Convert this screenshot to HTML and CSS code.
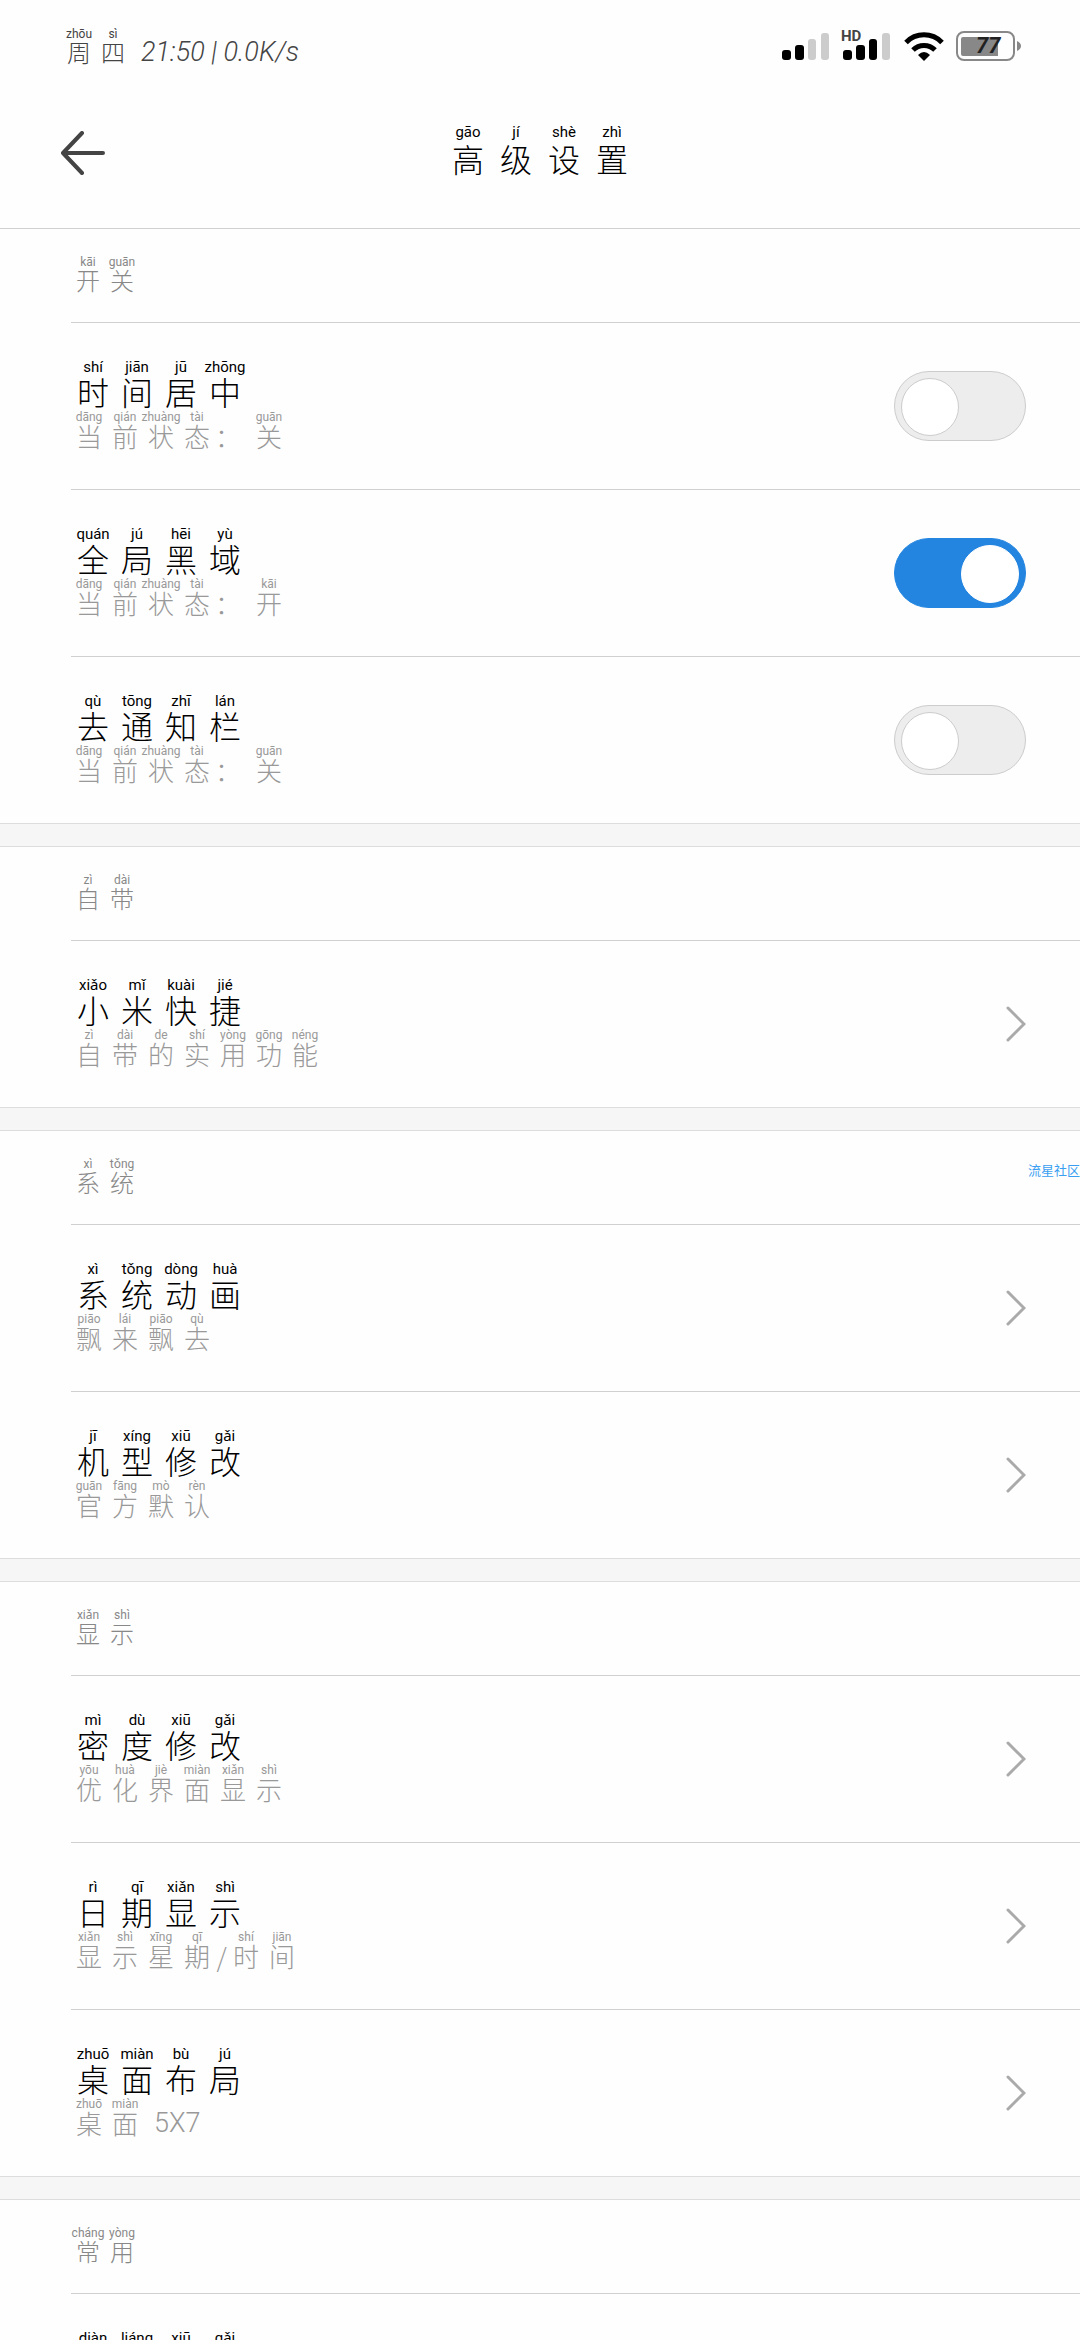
FILE: index.html
```html
<!DOCTYPE html>
<html lang="zh-CN">
<head>
<meta charset="utf-8">
<meta name="viewport" content="width=device-width, initial-scale=1">
<title>高级设置</title>
<link rel="stylesheet" href="styles.css">
</head>
<body>
<div class="app">
  <div class="status">
    <div class="py py-status"><ruby>周<rt>zhōu</rt></ruby><ruby>四<rt>sì</rt></ruby><span class="clock">21:50 | 0.0K/s</span></div>
    <div class="status-icons">
      <svg class="signal" width="49" height="30" viewBox="0 0 49 30" aria-hidden="true">
        <rect x="0" y="19" width="9" height="10" rx="3"/><rect x="13" y="14" width="9" height="15" rx="3"/>
        <rect class="dim" x="26" y="8" width="8" height="21" rx="3"/><rect class="dim" x="39" y="2" width="8" height="27" rx="3"/>
      </svg>
      <div class="signal-hd">
        <svg class="signal" width="49" height="30" viewBox="0 0 49 30" aria-hidden="true">
          <rect x="0" y="19" width="9" height="10" rx="3"/><rect x="13" y="14" width="9" height="15" rx="3"/>
          <rect x="26" y="8" width="8" height="21" rx="3"/><rect class="dim" x="39" y="2" width="8" height="27" rx="3"/>
        </svg>
        <span class="hd">HD</span>
      </div>
      <svg class="wifi" width="40" height="30" viewBox="1 0 40 30" aria-hidden="true">
        <path d="M3 11.500A25 25 0 0 1 39 11.500" fill="none" stroke="#000" stroke-width="5"/>
        <path d="M10 19A15.500 15.500 0 0 1 32 19" fill="none" stroke="#000" stroke-width="5"/>
        <path d="M21 30L15 24Q21 18 27 24Z"/>
      </svg>
      <div class="battery">
        <svg width="66" height="30" viewBox="0 0 66 30" aria-hidden="true">
          <rect x="1" y="1" width="57" height="28" rx="7" fill="none" stroke="#888" stroke-width="2"/>
          <path d="M7 6H42V25H7Q5 25 5 23V8Q5 6 7 6Z" fill="#888"/>
          <path d="M61 10Q65 12 65 15T61 20Z" fill="#888"/>
        </svg>
        <span class="level">77</span>
      </div>
    </div>
  </div>

  <header class="bar">
    <button class="back" type="button" aria-label="返回">
      <svg width="46" height="44" viewBox="0 0 46 44" aria-hidden="true"><path d="M22 2L3 22L22 42M3 22H43" fill="none" stroke="#444" stroke-width="4" stroke-linecap="round" stroke-linejoin="round"/></svg>
    </button>
    <h1 class="py py-head"><ruby>高<rt>gāo</rt></ruby><ruby>级<rt>jí</rt></ruby><ruby>设<rt>shè</rt></ruby><ruby>置<rt>zhì</rt></ruby></h1>
  </header>

  <main class="list">
    <section class="group">
      <h2 class="label py py-label"><ruby>开<rt>kāi</rt></ruby><ruby>关<rt>guān</rt></ruby></h2>
      <label class="row">
        <span class="text">
          <span class="py py-title"><ruby>时<rt>shí</rt></ruby><ruby>间<rt>jiān</rt></ruby><ruby>居<rt>jū</rt></ruby><ruby>中<rt>zhōng</rt></ruby></span>
          <span class="py py-sub"><ruby>当<rt>dāng</rt></ruby><ruby>前<rt>qián</rt></ruby><ruby>状<rt>zhuàng</rt></ruby><ruby>态<rt>tài</rt></ruby><span class="colon">：</span><ruby>关<rt>guān</rt></ruby></span>
        </span>
        <input class="switch" type="checkbox">
      </label>
      <label class="row">
        <span class="text">
          <span class="py py-title"><ruby>全<rt>quán</rt></ruby><ruby>局<rt>jú</rt></ruby><ruby>黑<rt>hēi</rt></ruby><ruby>域<rt>yù</rt></ruby></span>
          <span class="py py-sub"><ruby>当<rt>dāng</rt></ruby><ruby>前<rt>qián</rt></ruby><ruby>状<rt>zhuàng</rt></ruby><ruby>态<rt>tài</rt></ruby><span class="colon">：</span><ruby>开<rt>kāi</rt></ruby></span>
        </span>
        <input class="switch" type="checkbox" checked>
      </label>
      <label class="row">
        <span class="text">
          <span class="py py-title"><ruby>去<rt>qù</rt></ruby><ruby>通<rt>tōng</rt></ruby><ruby>知<rt>zhī</rt></ruby><ruby>栏<rt>lán</rt></ruby></span>
          <span class="py py-sub"><ruby>当<rt>dāng</rt></ruby><ruby>前<rt>qián</rt></ruby><ruby>状<rt>zhuàng</rt></ruby><ruby>态<rt>tài</rt></ruby><span class="colon">：</span><ruby>关<rt>guān</rt></ruby></span>
        </span>
        <input class="switch" type="checkbox">
      </label>
    </section>

    <section class="group">
      <h2 class="label py py-label"><ruby>自<rt>zì</rt></ruby><ruby>带<rt>dài</rt></ruby></h2>
      <a class="row" href="#shortcuts">
        <span class="text">
          <span class="py py-title"><ruby>小<rt>xiǎo</rt></ruby><ruby>米<rt>mǐ</rt></ruby><ruby>快<rt>kuài</rt></ruby><ruby>捷<rt>jié</rt></ruby></span>
          <span class="py py-sub"><ruby>自<rt>zì</rt></ruby><ruby>带<rt>dài</rt></ruby><ruby>的<rt>de</rt></ruby><ruby>实<rt>shí</rt></ruby><ruby>用<rt>yòng</rt></ruby><ruby>功<rt>gōng</rt></ruby><ruby>能<rt>néng</rt></ruby></span>
        </span>
        <svg class="chevron" width="20" height="36" viewBox="0 0 20 36" aria-hidden="true"><path d="M2 2L18 18L2 34"/></svg>
      </a>
    </section>

    <section class="group">
      <h2 class="label py py-label"><ruby>系<rt>xì</rt></ruby><ruby>统<rt>tǒng</rt></ruby></h2>
      <span class="watermark">流星社区</span>
      <a class="row" href="#animation">
        <span class="text">
          <span class="py py-title"><ruby>系<rt>xì</rt></ruby><ruby>统<rt>tǒng</rt></ruby><ruby>动<rt>dòng</rt></ruby><ruby>画<rt>huà</rt></ruby></span>
          <span class="py py-sub"><ruby>飘<rt>piāo</rt></ruby><ruby>来<rt>lái</rt></ruby><ruby>飘<rt>piāo</rt></ruby><ruby>去<rt>qù</rt></ruby></span>
        </span>
        <svg class="chevron" width="20" height="36" viewBox="0 0 20 36" aria-hidden="true"><path d="M2 2L18 18L2 34"/></svg>
      </a>
      <a class="row" href="#model">
        <span class="text">
          <span class="py py-title"><ruby>机<rt>jī</rt></ruby><ruby>型<rt>xíng</rt></ruby><ruby>修<rt>xiū</rt></ruby><ruby>改<rt>gǎi</rt></ruby></span>
          <span class="py py-sub"><ruby>官<rt>guān</rt></ruby><ruby>方<rt>fāng</rt></ruby><ruby>默<rt>mò</rt></ruby><ruby>认<rt>rèn</rt></ruby></span>
        </span>
        <svg class="chevron" width="20" height="36" viewBox="0 0 20 36" aria-hidden="true"><path d="M2 2L18 18L2 34"/></svg>
      </a>
    </section>

    <section class="group">
      <h2 class="label py py-label"><ruby>显<rt>xiǎn</rt></ruby><ruby>示<rt>shì</rt></ruby></h2>
      <a class="row" href="#density">
        <span class="text">
          <span class="py py-title"><ruby>密<rt>mì</rt></ruby><ruby>度<rt>dù</rt></ruby><ruby>修<rt>xiū</rt></ruby><ruby>改<rt>gǎi</rt></ruby></span>
          <span class="py py-sub"><ruby>优<rt>yōu</rt></ruby><ruby>化<rt>huà</rt></ruby><ruby>界<rt>jiè</rt></ruby><ruby>面<rt>miàn</rt></ruby><ruby>显<rt>xiǎn</rt></ruby><ruby>示<rt>shì</rt></ruby></span>
        </span>
        <svg class="chevron" width="20" height="36" viewBox="0 0 20 36" aria-hidden="true"><path d="M2 2L18 18L2 34"/></svg>
      </a>
      <a class="row" href="#date">
        <span class="text">
          <span class="py py-title"><ruby>日<rt>rì</rt></ruby><ruby>期<rt>qī</rt></ruby><ruby>显<rt>xiǎn</rt></ruby><ruby>示<rt>shì</rt></ruby></span>
          <span class="py py-sub"><ruby>显<rt>xiǎn</rt></ruby><ruby>示<rt>shì</rt></ruby><ruby>星<rt>xīng</rt></ruby><ruby>期<rt>qī</rt></ruby><span class="slash">/</span><ruby>时<rt>shí</rt></ruby><ruby>间<rt>jiān</rt></ruby></span>
        </span>
        <svg class="chevron" width="20" height="36" viewBox="0 0 20 36" aria-hidden="true"><path d="M2 2L18 18L2 34"/></svg>
      </a>
      <a class="row" href="#desktop">
        <span class="text">
          <span class="py py-title"><ruby>桌<rt>zhuō</rt></ruby><ruby>面<rt>miàn</rt></ruby><ruby>布<rt>bù</rt></ruby><ruby>局<rt>jú</rt></ruby></span>
          <span class="py py-sub"><ruby>桌<rt>zhuō</rt></ruby><ruby>面<rt>miàn</rt></ruby><span class="latin">5X7</span></span>
        </span>
        <svg class="chevron" width="20" height="36" viewBox="0 0 20 36" aria-hidden="true"><path d="M2 2L18 18L2 34"/></svg>
      </a>
    </section>

    <section class="group">
      <h2 class="label py py-label"><ruby>常<rt>cháng</rt></ruby><ruby>用<rt>yòng</rt></ruby></h2>
      <a class="row" href="#battery">
        <span class="text">
          <span class="py py-title"><ruby>电<rt>diàn</rt></ruby><ruby>量<rt>liáng</rt></ruby><ruby>修<rt>xiū</rt></ruby><ruby>改<rt>gǎi</rt></ruby></span>
        </span>
      </a>
    </section>
  </main>
</div>
</body>
</html>
```

FILE: styles.css
```css
* { box-sizing: border-box; }

body {
  margin: 0;
  background: #fefefe;
  color: #000;
  font-family: "Noto Sans CJK SC", sans-serif;
  font-weight: 300;
}

.app {
  height: 100vh;
  display: flex;
  flex-direction: column;
}

/* Characters with pinyin above, one equal cell for each character */
.py {
  display: flex;
  align-items: flex-end;
  margin: 0;
  font-weight: 300;
  white-space: nowrap;
}

.py ruby {
  display: flex;
  flex-direction: column-reverse;
  align-items: center;
}

.py rt {
  display: block;
  font-family: Roboto, "Noto Sans", sans-serif;
  font-weight: 400;
}

.py-status { font-size: 24px; line-height: 24px; color: #444; }
.py-status ruby { width: 34px; }
.py-status rt { font-size: 12px; line-height: 12px; }

.py-head { font-size: 32px; line-height: 34px; }
.py-head ruby { width: 48px; }
.py-head rt { font-size: 15px; line-height: 18px; }

.py-label { font-size: 24px; line-height: 24px; color: #888; }
.py-label ruby { width: 34px; }
.py-label rt { font-size: 12px; line-height: 12px; }

.py-title { font-size: 32px; line-height: 32px; }
.py-title ruby { width: 44px; }
.py-title rt { font-size: 15px; line-height: 16px; }

.py-sub { font-size: 26px; line-height: 26px; color: #999; }
.py-sub ruby { width: 36px; }
.py-sub rt { font-size: 12px; line-height: 12px; }

/* Status bar */
.status {
  flex: none;
  height: 92px;
  padding: 0 58px 0 62px;
  display: flex;
  align-items: center;
  justify-content: space-between;
}

.clock {
  padding-left: 11px;
  font-family: Roboto, sans-serif;
  font-size: 27px;
  font-style: italic;
}

.status-icons { display: flex; align-items: center; gap: 12px; }
.signal { display: block; fill: #000; }
.signal .dim { fill: #ccc; }
.signal-hd, .battery { position: relative; }

.hd {
  position: absolute;
  left: -2px;
  top: -2px;
  font: 700 15px/15px Roboto, sans-serif;
  color: #444;
}

.wifi, .battery svg { display: block; }

.level {
  position: absolute;
  left: 20px;
  top: 3px;
  font: italic 700 22px/24px Roboto, sans-serif;
  color: #222;
}

/* Title bar */
.bar {
  flex: none;
  padding: 31px 60px 53px;
  display: grid;
  grid-template-columns: 1fr auto 1fr;
  align-items: end;
  border-bottom: 1px solid #d0d0d0;
}

.back {
  justify-self: start;
  padding: 0;
  border: 0;
  background: none;
}

.back svg { display: block; }

/* Settings list */
.list {
  flex: 1;
  min-height: 0;
  overflow-y: auto;
  scrollbar-width: none;
  background: #f6f6f6;
}

.group {
  position: relative;
  padding-left: 71px;
  background: #fefefe;
  border-bottom: 1px solid #ddd;
}

.group + .group {
  margin-top: 22px;
  border-top: 1px solid #ddd;
}

.label {
  height: 93px;
  padding-bottom: 30px;
}

.row {
  min-height: 167px;
  padding-right: 54px;
  display: flex;
  align-items: center;
  justify-content: space-between;
  border-top: 1px solid #d0d0d0;
  color: inherit;
  text-decoration: none;
}

.text {
  align-self: flex-start;
  padding-top: 36px;
  display: grid;
  gap: 4px;
}

.colon { width: 36px; }
.slash { width: 13px; text-align: center; }
.latin { padding-left: 11px; font-family: Roboto, sans-serif; font-size: 27px; }

.chevron {
  fill: none;
  stroke: #aaa;
  stroke-width: 3;
  stroke-linecap: round;
}

.switch {
  appearance: none;
  flex: none;
  width: 132px;
  height: 70px;
  margin: 0;
  padding: 6px;
  display: flex;
  border: 1px solid #ccc;
  border-radius: 35px;
  background: #ededed;
}

.switch::before {
  content: "";
  width: 56px;
  height: 56px;
  border: 1px solid #ccc;
  border-radius: 50%;
  background: #fff;
}

.switch:checked {
  justify-content: flex-end;
  border-color: #2385e0;
  background: #2385e0;
}

.switch:checked::before { border-color: #fff; }

.watermark {
  position: absolute;
  top: 30px;
  right: 0;
  font-size: 13px;
  line-height: 18px;
  font-weight: 400;
  color: #3a9ff0;
}
```
